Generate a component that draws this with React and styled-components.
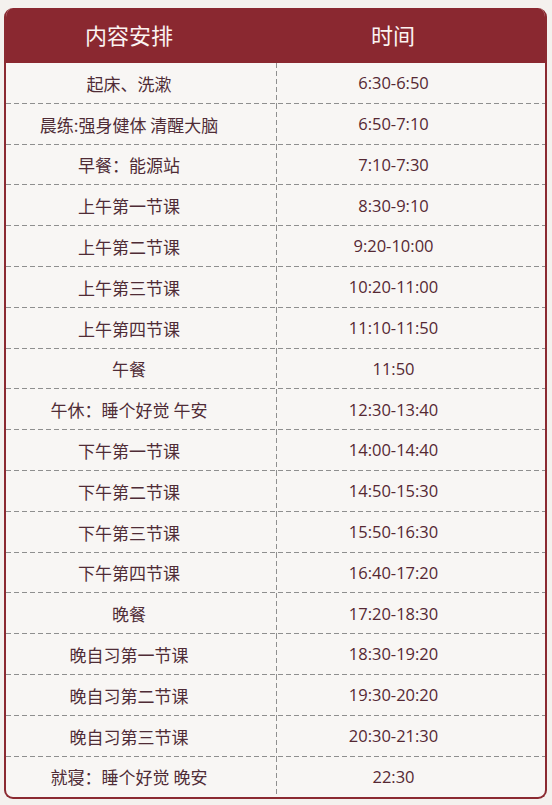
import React from "react";
import styled, { createGlobalStyle } from "styled-components";

const Global = createGlobalStyle`
  html, body { margin: 0; padding: 0; background: #f4f1ee; }
  body { font-family: "Open Sans", "Noto Sans CJK SC", sans-serif; }
`;

const Page = styled.div`
  padding: 8px 5px 4px 4px;
`;

const Card = styled.div`
  width: 543px;
  box-sizing: border-box;
  border: 2px solid #8b2a31;
  border-top: none;
  border-radius: 9px;
  overflow: hidden;
  background: #f8f6f4;
`;

const Header = styled.div`
  display: grid;
  grid-template-columns: 270px 1fr;
  height: 55px;
  background: #8a2830;
  color: #fbf3f1;
  font-family: "Noto Sans CJK SC", sans-serif;
  font-size: 22px;
  align-items: center;
`;

const HeadCell = styled.div`
  text-align: center;
  padding-right: ${(p) => p.$pr}px;
  padding-left: ${(p) => p.$pl || 0}px;
  line-height: 1;
  margin-top: -4px;
`;

const Row = styled.div`
  display: grid;
  grid-template-columns: 270px 1px 1fr;
  height: 40.8px;
  align-items: center;
  background-image: ${(p) =>
    p.$last ? "none" : "linear-gradient(to right, #8f8f8f 62%, transparent 0)"};
  background-size: 8px 1px;
  background-repeat: repeat-x;
  background-position: 0 100%;
`;

const Divider = styled.div`
  align-self: stretch;
  width: 1px;
  background-image: linear-gradient(to bottom, #8f8f8f 62%, transparent 0);
  background-size: 1px 8px;
  background-repeat: repeat-y;
`;

const Item = styled.div`
  text-align: center;
  padding-right: 24px;
  font-family: "Noto Sans CJK SC", sans-serif;
  font-size: 17px;
  color: #4f2c36;
  line-height: 1;
`;

const Time = styled.div`
  text-align: center;
  padding-right: 35px;
  font-family: "Open Sans", "Noto Sans CJK SC", sans-serif;
  font-size: 16.5px;
  color: #552833;
  line-height: 1;
`;

const rows = [
  ["起床、洗漱", "6:30-6:50"],
  ["晨练:强身健体 清醒大脑", "6:50-7:10"],
  ["早餐：能源站", "7:10-7:30"],
  ["上午第一节课", "8:30-9:10"],
  ["上午第二节课", "9:20-10:00"],
  ["上午第三节课", "10:20-11:00"],
  ["上午第四节课", "11:10-11:50"],
  ["午餐", "11:50"],
  ["午休：睡个好觉 午安", "12:30-13:40"],
  ["下午第一节课", "14:00-14:40"],
  ["下午第二节课", "14:50-15:30"],
  ["下午第三节课", "15:50-16:30"],
  ["下午第四节课", "16:40-17:20"],
  ["晚餐", "17:20-18:30"],
  ["晚自习第一节课", "18:30-19:20"],
  ["晚自习第二节课", "19:30-20:20"],
  ["晚自习第三节课", "20:30-21:30"],
  ["就寝：睡个好觉 晚安", "22:30"],
];

export default function App() {
  return (
    <>
      <Global />
      <Page>
        <Card>
          <Header>
            <HeadCell $pr={24}>内容安排</HeadCell>
            <HeadCell $pr={36} $pl={1}>时间</HeadCell>
          </Header>
          {rows.map(([a, b], i) => (
            <Row key={i} $last={i === rows.length - 1}>
              <Item>{a}</Item>
              <Divider />
              <Time>{b}</Time>
            </Row>
          ))}
        </Card>
      </Page>
    </>
  );
}
